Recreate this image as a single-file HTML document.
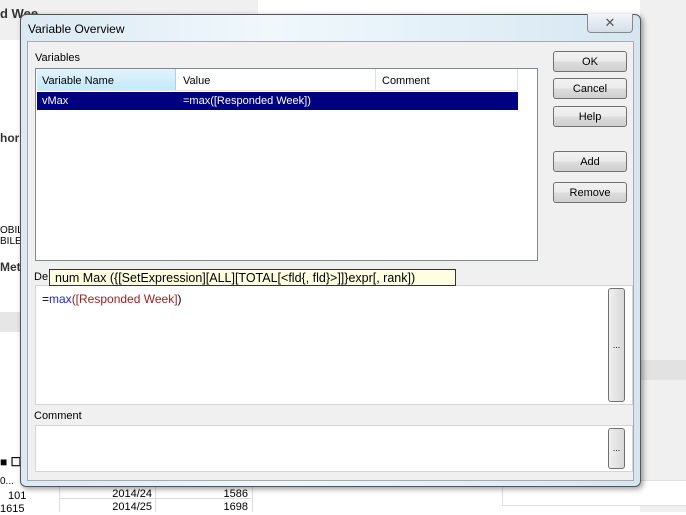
<!DOCTYPE html><html><head><style>
body{margin:0;width:686px;height:512px;position:relative;overflow:hidden;background:#fff;font-family:"Liberation Sans",sans-serif;font-size:11px;color:#000}
.a{position:absolute}
.btn{position:absolute;left:553px;width:72px;height:19px;border:1px solid #707070;border-radius:3px;background:linear-gradient(#f2f2f2,#ebebeb 50%,#dddddd 51%,#cfcfcf);text-align:center;line-height:20px;font-size:11px}
.box{position:absolute;background:#fff;border:1px solid #d5d5d5}
.sb{position:absolute;width:15px;border:1px solid #707070;border-radius:3px;background:linear-gradient(90deg,#f0f0f0,#d8d8d8);text-align:center;font-size:9px}
.r{position:absolute;text-align:right}
</style></head><body>
<div class="a" style="left:0;top:0;width:258px;height:40px;background:#f0f0f0"></div>
<div class="a" style="left:0;top:6px;font-size:13px;font-weight:bold;color:#333">d Wee</div>
<div class="a" style="left:0;top:131px;font-size:12px;font-weight:bold;color:#333">hor</div>
<div class="a" style="left:0;top:225px;font-size:10px">OBILE<br>BILE</div>
<div class="a" style="left:0;top:260px;font-size:12px;font-weight:bold;color:#333">Met</div>
<div class="a" style="left:0;top:312px;width:22px;height:20px;background:#e6e6e6"></div>
<div class="a" style="left:640px;top:0;width:46px;height:512px;background:#f0f0f0"></div>
<div class="a" style="left:640px;top:360px;width:46px;height:20px;background:#e2e2e2"></div>
<div class="a" style="left:502px;top:480px;width:184px;height:24px;background:#fff;border:1px solid #e0e0e0"></div>
<div class="a" style="left:0;top:455px;font-size:12px;font-weight:bold">■ ☐</div>
<div class="a" style="left:0;top:476px;font-size:10px">0...</div>
<div class="a" style="left:8px;top:490px;font-size:11px">101</div>
<div class="a" style="left:0;top:503px;font-size:11px">1615</div>
<div class="a" style="left:59px;top:484px;width:192px;height:28px;border-left:1px solid #ddd;border-right:1px solid #ddd"></div>
<div class="a" style="left:59px;top:498px;width:192px;height:1px;background:#ddd"></div>
<div class="a" style="left:155px;top:484px;width:1px;height:28px;background:#ddd"></div>
<div class="r" style="left:60px;width:92px;top:488px">2014/24</div><div class="r" style="left:156px;width:92px;top:488px">1586</div>
<div class="r" style="left:60px;width:92px;top:501px">2014/25</div><div class="r" style="left:156px;width:92px;top:501px">1698</div>
<!-- dialog -->
<div class="a" style="left:20px;top:14px;width:619px;height:471px;border:1px solid #555;border-radius:6px;background:linear-gradient(90deg,#dbe9f3,#f0f8fc 40%,#e3f0f8 70%,#d6e6f1);box-shadow:2px 2px 6px rgba(0,0,0,.4)"></div>
<div class="a" style="left:28px;top:22px;font-size:12px">Variable Overview</div>
<div class="a" style="left:587px;top:14px;width:44px;height:18px;border:1px solid #888;border-top:none;border-radius:0 0 4px 4px;background:linear-gradient(#f2f6fa,#d4dee8);text-align:center;font-size:13px;color:#555;line-height:17px">✕</div>
<div class="a" style="left:27px;top:41px;width:605px;height:438px;background:#f0f0f0;border:1px solid #aaa"></div>
<div class="a" style="left:35px;top:52px">Variables</div>
<div class="box" style="left:35px;top:68px;width:501px;height:191px;border-color:#828790"></div>
<div class="a" style="left:37px;top:69px;width:480px;height:21px;background:#fff;border-bottom:1px solid #e5e5e5"></div>
<div class="a" style="left:37px;top:69px;width:138px;height:21px;background:linear-gradient(#e3f4fc,#c3e9fa);border-right:1px solid #9ed6f0"></div>
<div class="a" style="left:375px;top:69px;width:1px;height:21px;background:#e0e0e0"></div>
<div class="a" style="left:517px;top:69px;width:1px;height:21px;background:#e0e0e0"></div>
<div class="a" style="left:42px;top:75px">Variable Name</div>
<div class="a" style="left:183px;top:75px">Value</div>
<div class="a" style="left:382px;top:75px">Comment</div>
<div class="a" style="left:37px;top:92px;width:481px;height:18px;background:#000080"></div>
<div class="a" style="left:42px;top:95px;color:#fff">vMax</div>
<div class="a" style="left:183px;top:95px;color:#fff">=max([Responded Week])</div>
<div class="btn" style="top:51px">OK</div>
<div class="btn" style="top:78px">Cancel</div>
<div class="btn" style="top:106px">Help</div>
<div class="btn" style="top:151px">Add</div>
<div class="btn" style="top:182px">Remove</div>
<div class="a" style="left:34px;top:271px">De</div>
<div class="box" style="left:35px;top:285px;width:596px;height:118px"></div>
<div class="a" style="left:42px;top:292px;font-size:12px">=<span style="color:#2020ff">max</span><span style="color:#a02020">([Responded Week]</span>)</div>
<div class="sb" style="left:608px;top:288px;height:112px;line-height:112px">...</div>
<div class="a" style="left:49px;top:269px;width:407px;height:17px;background:#ffffe1;border:1px solid #333;font-size:12.5px;line-height:17px;padding-left:5px;box-sizing:border-box;white-space:nowrap">num Max ({[SetExpression][ALL][TOTAL[&lt;fld{, fld}&gt;]]}expr[, rank])</div>
<div class="a" style="left:34px;top:410px">Comment</div>
<div class="box" style="left:35px;top:425px;width:596px;height:45px"></div>
<div class="sb" style="left:608px;top:428px;height:39px;line-height:39px">...</div>
</body></html>
